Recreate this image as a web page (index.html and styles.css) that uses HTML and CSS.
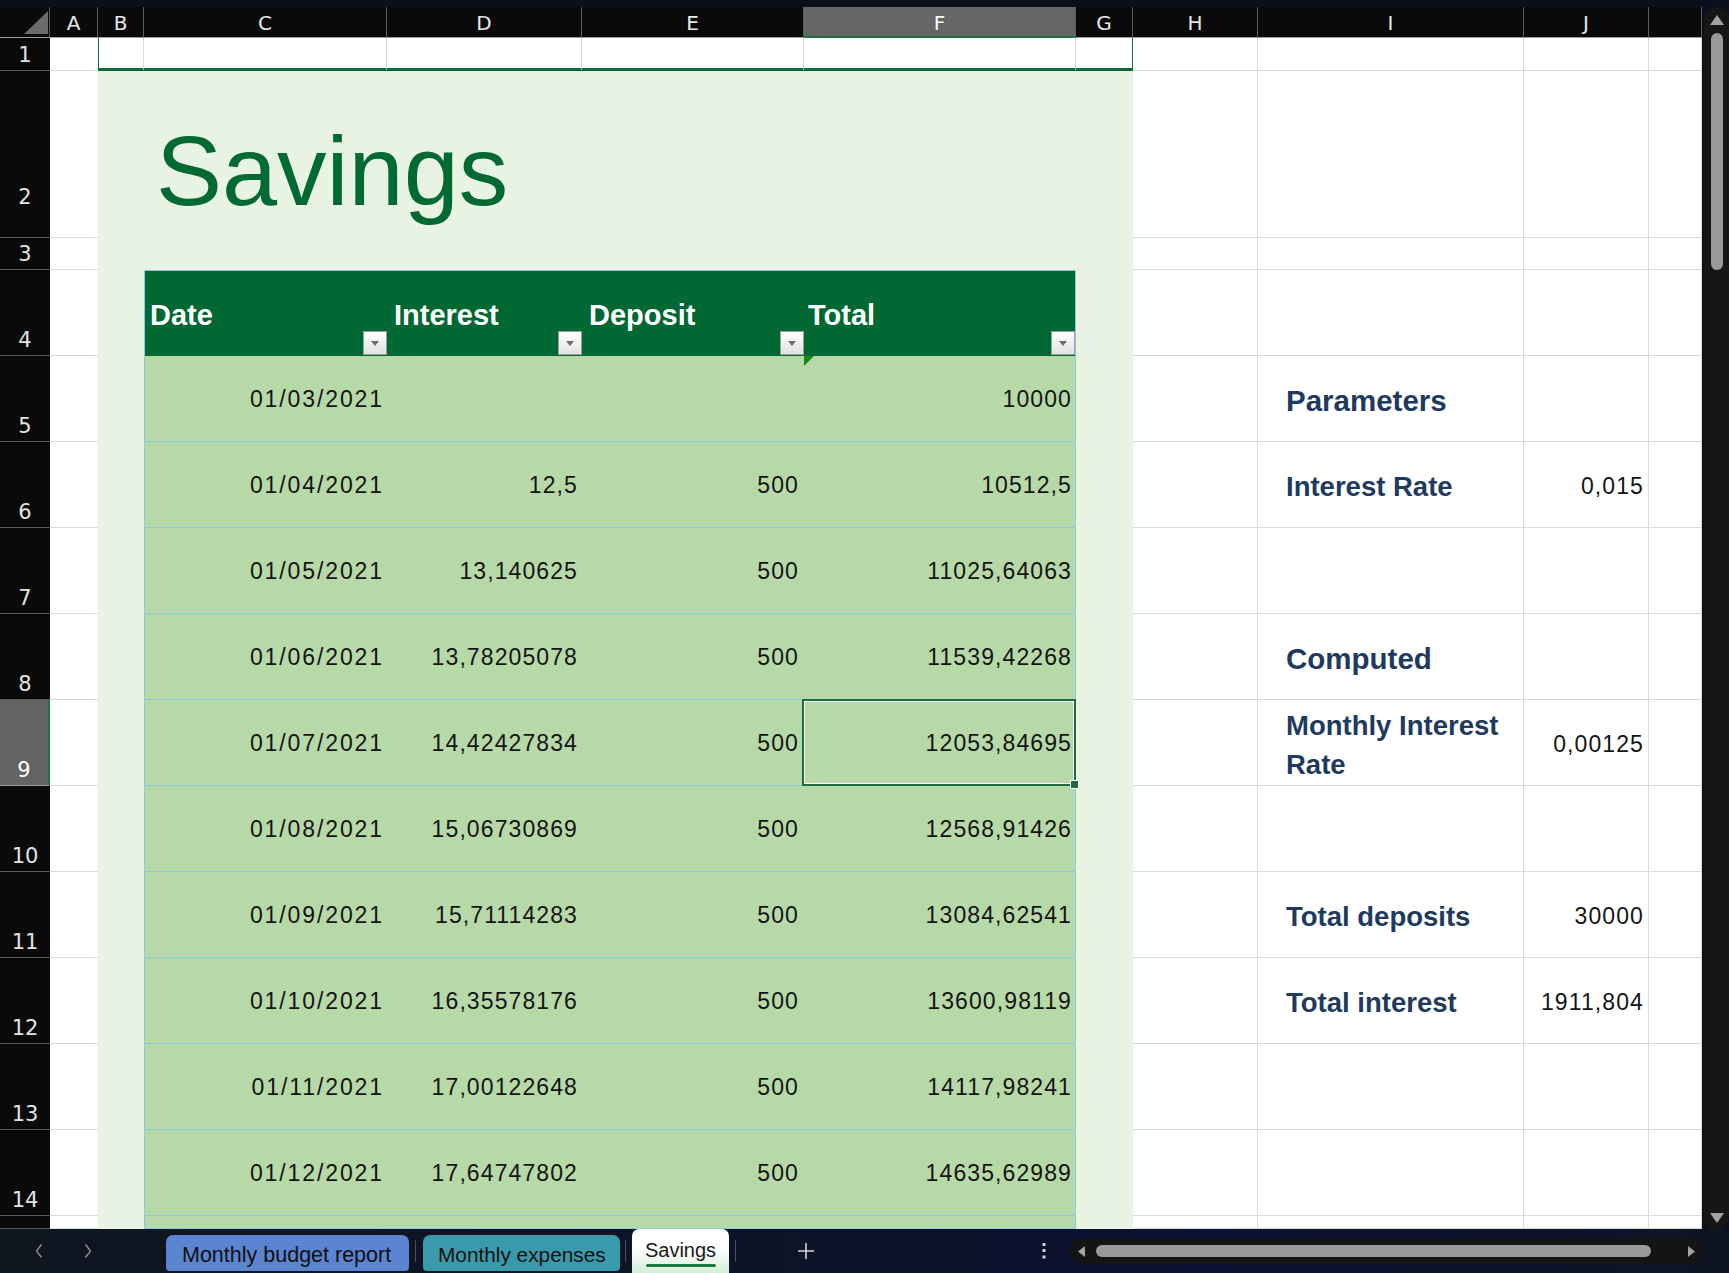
FILE: index.html
```html
<!DOCTYPE html>
<html>
<head>
<meta charset="utf-8">
<title>Savings</title>
<link rel="stylesheet" href="styles.css">
</head>
<body>
<div class="app">
  <div class="topband"></div>
  <div class="main">
    <div class="sheet">
      <div class="row h-col">
        <div class="corner"><svg width="50" height="30" viewBox="0 0 50 30"><polygon points="24,27 48,27 48,4" fill="#6b6b6b"/></svg></div>
        <div class="ch">A</div><div class="ch">B</div><div class="ch">C</div><div class="ch">D</div><div class="ch">E</div><div class="ch csel">F</div><div class="ch">G</div><div class="ch">H</div><div class="ch">I</div><div class="ch">J</div><div class="ch"></div>
      </div>

      <div class="row h1">
        <div class="rh">1</div><div class="wa"></div>
        <div class="b1 first"></div><div class="b1"></div><div class="b1"></div><div class="b1"></div><div class="b1"></div><div class="b1 last"></div>
        <div class="w"></div><div class="w"></div><div class="w"></div><div class="w"></div>
      </div>

      <div class="row h2">
        <div class="rh r2">2</div><div class="wa"></div>
        <div class="band span6 title">Savings</div>
        <div class="w"></div><div class="w"></div><div class="w"></div><div class="w"></div>
      </div>

      <div class="row h3">
        <div class="rh">3</div><div class="wa"></div>
        <div class="band span6"></div>
        <div class="w"></div><div class="w"></div><div class="w"></div><div class="w"></div>
      </div>

      <div class="row h86">
        <div class="rh">4</div><div class="wa"></div><div class="band"></div>
        <div class="th first"><span>Date</span><i class="fbtn"></i></div>
        <div class="th"><span>Interest</span><i class="fbtn"></i></div>
        <div class="th"><span>Deposit</span><i class="fbtn"></i></div>
        <div class="th last"><span>Total</span><i class="fbtn"></i></div>
        <div class="band"></div>
        <div class="w"></div><div class="w"></div><div class="w"></div><div class="w"></div>
      </div>

      <div class="row h86">
        <div class="rh">5</div><div class="wa"></div><div class="band"></div>
        <div class="td c">01/03/2021</div><div class="td d"></div><div class="td e"></div><div class="td f flag">10000</div>
        <div class="band"></div>
        <div class="w"></div><div class="w hd">Parameters</div><div class="w"></div><div class="w"></div>
      </div>

      <div class="row h86">
        <div class="rh">6</div><div class="wa"></div><div class="band"></div>
        <div class="td c">01/04/2021</div><div class="td d">12,5</div><div class="td e">500</div><div class="td f">10512,5</div>
        <div class="band"></div>
        <div class="w"></div><div class="w lbl">Interest Rate</div><div class="w val">0,015</div><div class="w"></div>
      </div>

      <div class="row h86">
        <div class="rh">7</div><div class="wa"></div><div class="band"></div>
        <div class="td c">01/05/2021</div><div class="td d">13,140625</div><div class="td e">500</div><div class="td f">11025,64063</div>
        <div class="band"></div>
        <div class="w"></div><div class="w"></div><div class="w"></div><div class="w"></div>
      </div>

      <div class="row h86">
        <div class="rh">8</div><div class="wa"></div><div class="band"></div>
        <div class="td c">01/06/2021</div><div class="td d">13,78205078</div><div class="td e">500</div><div class="td f">11539,42268</div>
        <div class="band"></div>
        <div class="w"></div><div class="w hd">Computed</div><div class="w"></div><div class="w"></div>
      </div>

      <div class="row h86">
        <div class="rh rsel">9</div><div class="wa"></div><div class="band"></div>
        <div class="td c">01/07/2021</div><div class="td d">14,42427834</div><div class="td e">500</div><div class="td f sel">12053,84695</div>
        <div class="band"></div>
        <div class="w"></div><div class="w lbl">Monthly Interest Rate</div><div class="w val">0,00125</div><div class="w"></div>
      </div>

      <div class="row h86">
        <div class="rh">10</div><div class="wa"></div><div class="band"></div>
        <div class="td c">01/08/2021</div><div class="td d">15,06730869</div><div class="td e">500</div><div class="td f">12568,91426</div>
        <div class="band"></div>
        <div class="w"></div><div class="w"></div><div class="w"></div><div class="w"></div>
      </div>

      <div class="row h86">
        <div class="rh">11</div><div class="wa"></div><div class="band"></div>
        <div class="td c">01/09/2021</div><div class="td d">15,71114283</div><div class="td e">500</div><div class="td f">13084,62541</div>
        <div class="band"></div>
        <div class="w"></div><div class="w lbl">Total deposits</div><div class="w val">30000</div><div class="w"></div>
      </div>

      <div class="row h86">
        <div class="rh">12</div><div class="wa"></div><div class="band"></div>
        <div class="td c">01/10/2021</div><div class="td d">16,35578176</div><div class="td e">500</div><div class="td f">13600,98119</div>
        <div class="band"></div>
        <div class="w"></div><div class="w lbl">Total interest</div><div class="w val">1911,804</div><div class="w"></div>
      </div>

      <div class="row h86">
        <div class="rh">13</div><div class="wa"></div><div class="band"></div>
        <div class="td c">01/11/2021</div><div class="td d">17,00122648</div><div class="td e">500</div><div class="td f">14117,98241</div>
        <div class="band"></div>
        <div class="w"></div><div class="w"></div><div class="w"></div><div class="w"></div>
      </div>

      <div class="row h86">
        <div class="rh">14</div><div class="wa"></div><div class="band"></div>
        <div class="td c">01/12/2021</div><div class="td d">17,64747802</div><div class="td e">500</div><div class="td f">14635,62989</div>
        <div class="band"></div>
        <div class="w"></div><div class="w"></div><div class="w"></div><div class="w"></div>
      </div>

      <div class="row h15">
        <div class="rh"></div><div class="wa"></div><div class="band"></div>
        <div class="td c"></div><div class="td d"></div><div class="td e"></div><div class="td f"></div>
        <div class="band"></div>
        <div class="w"></div><div class="w"></div><div class="w"></div><div class="w"></div>
      </div>
    </div>

    <div class="vscroll">
      <svg class="varrow" width="14" height="10" viewBox="0 0 14 10"><polygon points="7,0 14,10 0,10" fill="#a3a3a3"/></svg>
      <div class="vthumb"></div>
      <div class="vspace"></div>
      <svg class="varrow" width="14" height="10" viewBox="0 0 14 10"><polygon points="0,0 14,0 7,10" fill="#a3a3a3"/></svg>
    </div>
  </div>

  <div class="tabbar">
    <div class="nav">
      <svg width="10" height="16" viewBox="0 0 10 16"><path d="M7.5 1.5 L2.5 8 L7.5 14.5" fill="none" stroke="#8d8d8d" stroke-width="1.4"/></svg>
      <svg width="10" height="16" viewBox="0 0 10 16"><path d="M2.5 1.5 L7.5 8 L2.5 14.5" fill="none" stroke="#8d8d8d" stroke-width="1.4"/></svg>
    </div>
    <div class="tab tab-blue">Monthly budget report</div>
    <div class="sep s1"></div>
    <div class="tab tab-teal">Monthly expenses</div>
    <div class="sep s2"></div>
    <div class="tab-active"><span class="tab-label">Savings</span><span class="tab-line"></span></div>
    <div class="sep s3"></div>
    <svg class="plus" width="18" height="18" viewBox="0 0 18 18"><path d="M9 1 V17 M1 9 H17" stroke="#d4d4d4" stroke-width="1.6"/></svg>
    <svg class="dots" width="4" height="16" viewBox="0 0 4 16"><rect x="0.5" y="0" width="3" height="3" fill="#cfcfcf"/><rect x="0.5" y="6" width="3" height="3" fill="#cfcfcf"/><rect x="0.5" y="12.5" width="3" height="3" fill="#cfcfcf"/></svg>
    <div class="hscroll">
      <svg width="7" height="11" viewBox="0 0 7 11"><polygon points="7,0 7,11 0,5.5" fill="#a3a3a3"/></svg>
      <div class="hthumb"></div>
      <svg class="hright" width="7" height="11" viewBox="0 0 7 11"><polygon points="0,0 7,5.5 0,11" fill="#a3a3a3"/></svg>
    </div>
  </div>
</div>
</body>
</html>
```

FILE: styles.css
```css
* { box-sizing: border-box; margin: 0; padding: 0; }
html, body { width: 1729px; height: 1273px; overflow: hidden; background: #0c111e; }
body { font-family: "Liberation Sans", Arial, sans-serif; }

.app { display: flex; flex-direction: column; width: 1729px; height: 1273px; }
.topband { height: 7px; background: #0a0f1c; }
.main { display: flex; height: 1222px; background: #0c1120; }
.sheet { width: 1702px; height: 1222px; overflow: hidden; background: #fff; }

.row {
  display: grid;
  grid-template-columns: 50px 48px 46px 243px 195px 222px 272px 57px 125px 266px 125px 53px;
}
.h-col { height: 31px; }
.h1 { height: 33px; }
.h2 { height: 167px; }
.h3 { height: 32px; }
.h86 { height: 86px; }
.h15 { height: 13px; }

/* headers */
.corner { background: #0a0a0a; border-bottom: 1px solid #9c9c9c; border-right: 1px solid #5c5c5c; }
.corner svg { display: block; }
.ch {
  background: #0a0a0a; color: #e8e8e8;
  font: 20px/1 "DejaVu Sans", sans-serif;
  display: flex; align-items: center; justify-content: center;
  padding-top: 2px;
  border-right: 1px solid #5c5c5c; border-bottom: 1px solid #9c9c9c;
}
.ch.csel { background: #666; color: #fff; border-bottom: 2px solid #1e7145; }
.rh {
  background: #0a0a0a; color: #e2e2e2;
  font: 21px/1 "DejaVu Sans", sans-serif;
  display: flex; align-items: flex-end; justify-content: center;
  padding-bottom: 4px;
  border-bottom: 1px solid #5a5a5a;
}
.rh.r2 { padding-bottom: 29px; }
.rh.rsel { background: #636363; color: #fff; border-right: 2px solid #1e7145; border-bottom-color: #9a9a9a; }

/* white cells */
.wa { background: #fff; border-bottom: 1px solid #dadada; }
.w { background: #fff; border-right: 1px solid #dadada; border-bottom: 1px solid #dadada; }
.b1 { background: #fff; border-right: 1px solid #dadada; border-bottom: 3px solid #0b6b36; }
.b1.first { border-left: 1px solid #0b6b36; }
.b1.last { border-right: 1px solid #0b6b36; }

/* green band */
.band { background: #e8f3e3; }
.span6 { grid-column: span 6; }
.title {
  color: #006a32;
  font: 99px/1 "Liberation Sans", Arial, sans-serif;
  padding: 50px 0 0 58px;
}

/* table header */
.th {
  background: #006832; color: #fff;
  font: bold 29px/1 "Liberation Sans", Arial, sans-serif;
  display: flex; align-items: center;
  padding: 3px 0 0 7px;
  border-top: 1px solid #8bcbe0;
}
.th.first { border-left: 1px solid #8bcbe0; padding-left: 5px; }
.th.last { border-right: 1px solid #8bcbe0; padding-left: 4px; }
.fbtn {
  margin-left: auto; align-self: flex-end; margin-bottom: 1px;
  width: 24px; height: 24px;
  background: linear-gradient(#ffffff, #e2e2e2);
  border: 1px solid #9d9d9d;
  display: flex; align-items: center; justify-content: center;
}
.fbtn::after {
  content: ""; width: 0; height: 0;
  border-left: 4px solid transparent; border-right: 4px solid transparent;
  border-top: 5px solid #6c6c6c;
}

/* table body */
.td {
  background: #b7d9a8; color: #141414;
  font: 23px/1 "Liberation Sans", Arial, sans-serif;
  letter-spacing: 1.1px;
  display: flex; align-items: center; justify-content: flex-end;
  padding-top: 2px;
  border-bottom: 1px solid #8bcbe0;
}
.td.c { border-left: 1px solid #8bcbe0; padding-right: 3px; letter-spacing: 1.9px; }
.td.d { padding-right: 4px; }
.td.e { padding-right: 5px; }
.td.f { border-right: 1px solid #8bcbe0; padding-right: 3px; }
.td.flag { position: relative; }
.td.flag::before {
  content: ""; position: absolute; top: 0; left: 0;
  border-top: 10px solid #128a12; border-right: 10px solid transparent;
}
.td.sel { position: relative; z-index: 2; }
.td.sel::after {
  content: ""; position: absolute; top: -1px; left: -2px; right: -1px; bottom: -1px;
  border: 2px solid #1d6b40; box-shadow: inset 0 0 0 1px #fff;
}
.td.sel::before {
  content: ""; position: absolute; right: -4px; bottom: -4px; z-index: 3;
  width: 7px; height: 7px; background: #1d6b40; border: 1px solid #fff;
}

/* right side */
.hd {
  color: #1f3a60;
  font: bold 29.5px/1 "Liberation Sans", Arial, sans-serif;
  display: flex; align-items: center;
  padding: 5px 0 0 28px;
}
.lbl {
  color: #1f3a60;
  font: bold 27.5px/39px "Liberation Sans", Arial, sans-serif;
  display: flex; align-items: center;
  padding: 4px 0 0 28px;
}
.val {
  color: #141414;
  font: 23px/1 "Liberation Sans", Arial, sans-serif;
  letter-spacing: 1.1px;
  display: flex; align-items: center; justify-content: flex-end;
  padding: 3px 4px 0 0;
}

/* vertical scrollbar */
.vscroll {
  width: 25px; margin-left: 2px; height: 1222px;
  background: #161616; border-radius: 12px;
  display: flex; flex-direction: column; align-items: center;
  padding: 8px 0 6px;
}
.varrow { display: block; flex: none; }
.vthumb { width: 12px; height: 237px; margin-top: 8px; background: #9a9a9a; border-radius: 6px; flex: none; }
.vspace { flex: 1; }

/* tab bar */
.tabbar {
  height: 44px;
  display: flex; align-items: center;
  background: linear-gradient(90deg, #101620 0%, #0e1426 40%, #0c1032 70%, #0f1424 100%);
  font-family: "Liberation Sans", Arial, sans-serif;
}
.nav { width: 166px; display: flex; align-items: center; padding-left: 34px; gap: 39px; }
.nav svg { display: block; }
.tab {
  align-self: flex-start; margin-top: 6px;
  height: 36px;
  border-radius: 7px 7px 4px 4px;
  color: #101010;
  font-size: 21.5px; line-height: 1;
  display: flex; align-items: center;
  padding-top: 5px;
  white-space: nowrap;
}
.tab-blue { width: 243px; background: #5b84d1; padding-left: 16px; }
.tab-teal { width: 197px; background: #389aaa; padding-left: 15px; font-size: 20.8px; }
.sep { width: 1px; height: 22px; background: #4a4f5a; }
.s1 { margin: 0 7px 0 6px; }
.s2 { margin: 0 6px 0 5px; }
.s3 { margin: 0 61px 0 6px; }
.tab-active {
  align-self: stretch;
  width: 97px;
  background: linear-gradient(#ffffff 45%, #d3eed8 100%);
  border-radius: 7px 7px 0 0;
  display: flex; flex-direction: column; align-items: center;
  padding-top: 11px;
}
.tab-label { color: #1a1a1a; font-size: 20px; line-height: 20px; }
.tab-line { width: 70px; height: 3px; margin-top: 4px; background: #1d7a3f; border-radius: 2px; }
.plus { display: block; }
.dots { display: block; margin-left: 227px; }
.hscroll {
  margin-left: 23px;
  width: 635px; height: 25px;
  background: #141414; border-radius: 13px;
  display: flex; align-items: center;
  padding: 0 9px;
}
.hscroll svg { display: block; flex: none; }
.hthumb { width: 555px; height: 12px; margin-left: 11px; background: #9a9a9a; border-radius: 6px; }
.hright { margin-left: auto; }
```
